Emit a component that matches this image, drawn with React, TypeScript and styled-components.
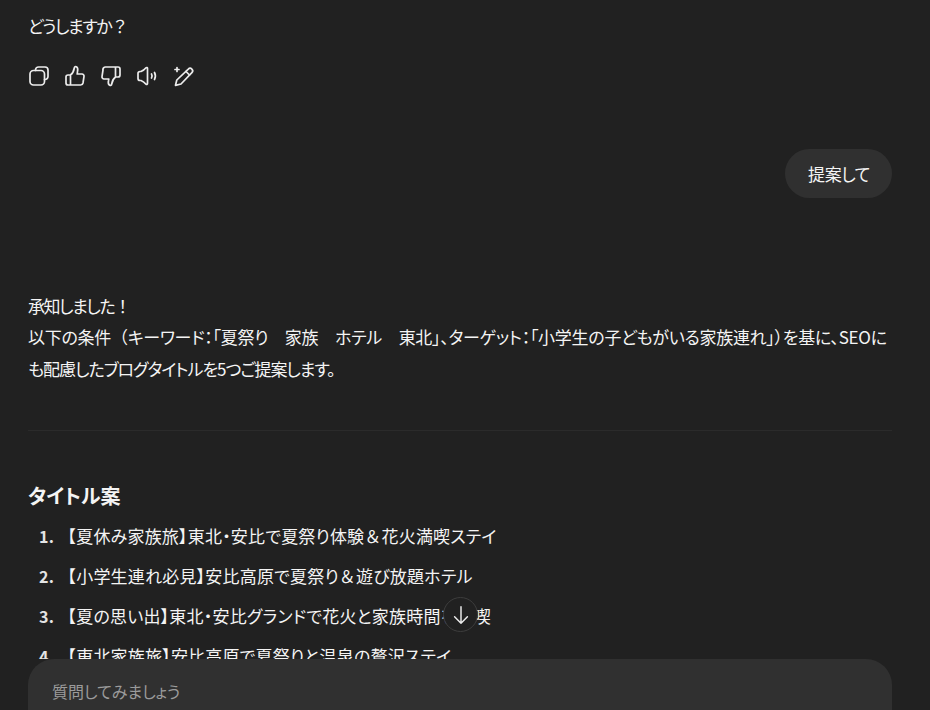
import { FC, ReactNode } from "react";
import styled, { createGlobalStyle } from "styled-components";

const GlobalStyle = createGlobalStyle`
  html, body {
    margin: 0;
    padding: 0;
    height: 100%;
    overflow: hidden;
    background: #212121;
  }
  #root {
    height: 100%;
  }
`;

const Page = styled.div`
  position: relative;
  display: flex;
  flex-direction: column;
  height: 710px;
  background: #212121;
  color: #f4f4f4;
  font-family: "Noto Sans CJK JP", "Noto Sans", sans-serif;
  font-size: 17px;
  font-feature-settings: "palt";
`;

const Thread = styled.main`
  flex: 1;
  min-height: 0;
  overflow: hidden;
  padding: 10px 38px 0 28px;
`;

const Paragraph = styled.p<{ $kana?: boolean }>`
  margin: 0;
  line-height: 31.5px;
  letter-spacing: ${({ $kana }) => ($kana ? "-1.4px" : "-0.28px")};
`;

// full-width punctuation, left out of the proportional metrics
const Wide = styled.span`
  font-feature-settings: normal;
`;

const Tight = styled.span`
  letter-spacing: -1px;
`;

const ActionBar = styled.div`
  display: flex;
  gap: 12px;
  margin: 22px 0 0 -1px;
`;

const ActionIcon = styled.svg`
  display: block;
  width: 24px;
  height: 24px;
  fill: none;
  stroke: #ececec;
  stroke-width: 1.7;
  stroke-linecap: round;
  stroke-linejoin: round;
`;

const UserRow = styled.div`
  display: flex;
  justify-content: flex-end;
  margin-top: 61px;
`;

const UserBubble = styled.div`
  padding: 0 22px 0 23px;
  height: 49px;
  line-height: 49px;
  letter-spacing: -0.4px;
  border-radius: 25px;
  background: #303030;
`;

const Reply = styled.section`
  margin-top: 92px;
`;

const Rule = styled.hr`
  margin: 46px 0 0;
  border: 0;
  border-top: 1px solid #2b2b2b;
`;

const Heading = styled.h3`
  margin: 49px 0 0;
  font-size: 20px;
  font-weight: 700;
  line-height: 32px;
`;

const TitleList = styled.ol`
  margin: 4px 0 0;
  padding: 0 0 0 31px;
  list-style: none;
  letter-spacing: 0.2px;
`;

const TitleItem = styled.li`
  position: relative;
  height: 40px;
  line-height: 40px;
`;

const ItemNumber = styled.span`
  position: absolute;
  left: -20px;
  font-size: 16px;
  font-weight: 700;
  color: #e4e4e4;
`;

const ScrollButton = styled.button`
  position: absolute;
  left: 443px;
  top: 597px;
  display: flex;
  align-items: center;
  justify-content: center;
  width: 35px;
  height: 35px;
  padding: 0;
  border: 1px solid #3d3d3d;
  border-radius: 50%;
  background: #212121;
  color: #ececec;
`;

const Composer = styled.div`
  flex: none;
  height: 51px;
  margin: 0 38px 0 28px;
  padding: 0 24px;
  font-size: 16px;
  line-height: 64px;
  border-radius: 26px 26px 0 0;
  background: #303030;
  color: #9b9b9b;
`;

const Action: FC<{ children: ReactNode }> = ({ children }) => (
  <ActionIcon viewBox="0 0 24 24">{children}</ActionIcon>
);

const titles = [
  "夏休み家族旅】東北・安比で夏祭り体験＆花火満喫ステイ",
  "小学生連れ必見】安比高原で夏祭り＆遊び放題ホテル",
  "夏の思い出】東北・安比グランドで花火と家族時間を満喫",
  "東北家族旅】安比高原で夏祭りと温泉の贅沢ステイ",
];

const withWideAmp = (title: string) =>
  title.split("＆").flatMap((part, i) =>
    i === 0 ? [part] : [<Wide key={i}>＆</Wide>, part]
  );

export default function App() {
  return (
    <Page>
      <GlobalStyle />
      <Thread>
        <Paragraph $kana>どうしますか<Wide>？</Wide></Paragraph>
        <ActionBar>
          <Action>
            <path d="M8.500 6.500V6a3 3 0 0 1 3-3H18a3 3 0 0 1 3 3v6.500a3 3 0 0 1-3 3h-.5" />
            <rect x="3" y="6.500" width="14.500" height="14.500" rx="3.500" />
          </Action>
          <Action>
            <path d="M7.500 11v10H5a2 2 0 0 1-2-2v-6a2 2 0 0 1 2-2h2.500c2-1.500 3.300-4 3.800-7 .2-1.300 1.200-1.500 2-1.200 1.400.6 1.700 2.500 1.200 4.700L14.200 10H19a2 2 0 0 1 2 2.300l-1 6.700a2.500 2.500 0 0 1-2.500 2H7.500" />
          </Action>
          <Action>
            <path d="M16.500 13V3H19a2 2 0 0 1 2 2v6a2 2 0 0 1-2 2h-2.500c-2 1.500-3.300 4-3.800 7-.2 1.300-1.200 1.500-2 1.200-1.400-.6-1.700-2.500-1.200-4.700l.3-1.500H5a2 2 0 0 1-2-2.300l1-6.700A2.500 2.500 0 0 1 6.500 3h10" />
          </Action>
          <Action>
            <path d="M3 9.500a2 2 0 0 1 2-2h1c2-.8 3.800-2.200 5-3.700.6-.6 1.500-.2 1.500.6v15.200c0 .8-.9 1.200-1.500.6-1.200-1.500-3-2.900-5-3.700H5a2 2 0 0 1-2-2z" />
            <path d="M16.500 10a4 4 0 0 1 0 4" />
            <path d="M19.500 8.500a7.500 7.500 0 0 1 0 7" />
          </Action>
          <Action>
            <path d="M17.300 5.100a2.500 2.500 0 0 1 3.600 3.500L10 20l-5.500 1.300L5.800 16z" />
            <path d="M15 7.500l3.500 3.500" />
            <path d="M6 3.500v4M4 5.500h4" />
          </Action>
        </ActionBar>
        <UserRow>
          <UserBubble>提案して</UserBubble>
        </UserRow>
        <Reply>
          <Paragraph $kana>承知しました<Wide>！</Wide></Paragraph>
          <Paragraph>
            以下の条件<Wide>（</Wide>キーワード：「夏祭り　家族　ホテル　東北」、ターゲット：「小学生の子どもがいる家族連れ」）を基に、SEOに
            <Tight>も配慮したブログタイトルを5つご提案します。</Tight>
          </Paragraph>
        </Reply>
        <Rule />
        <Heading>タイトル案</Heading>
        <TitleList>
          {titles.map((title, i) => (
            <TitleItem key={title}>
              <ItemNumber>{i + 1}.</ItemNumber>
              <Wide>【</Wide>
              {withWideAmp(title)}
            </TitleItem>
          ))}
        </TitleList>
      </Thread>
      <ScrollButton aria-label="scroll to bottom">
        <svg width="22" height="22" viewBox="0 0 24 24" fill="none" stroke="currentColor" strokeWidth="1.600" strokeLinecap="round" strokeLinejoin="round">
          <path d="M12 3v18M5 14l7 7 7-7" />
        </svg>
      </ScrollButton>
      <Composer>質問してみましょう</Composer>
    </Page>
  );
}
